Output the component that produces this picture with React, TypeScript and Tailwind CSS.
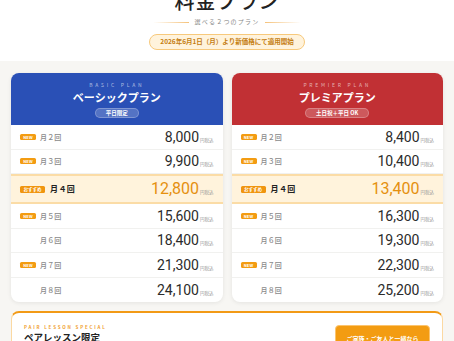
const jp = "font-['Noto_Sans_CJK_JP','Noto_Sans',sans-serif]";

type Row = { label: string; price: string; badge?: "new" | "pick" };

const basic: Row[] = [
  { label: "月２回", price: "8,000", badge: "new" },
  { label: "月３回", price: "9,900", badge: "new" },
  { label: "月４回", price: "12,800", badge: "pick" },
  { label: "月５回", price: "15,600", badge: "new" },
  { label: "月６回", price: "18,400" },
  { label: "月７回", price: "21,300", badge: "new" },
  { label: "月８回", price: "24,100" },
];

const premier: Row[] = [
  { label: "月２回", price: "8,400", badge: "new" },
  { label: "月３回", price: "10,400", badge: "new" },
  { label: "月４回", price: "13,400", badge: "pick" },
  { label: "月５回", price: "16,300", badge: "new" },
  { label: "月６回", price: "19,300" },
  { label: "月７回", price: "22,300", badge: "new" },
  { label: "月８回", price: "25,200" },
];

function PriceRow({ row }: { row: Row }) {
  const pick = row.badge === "pick";
  return (
    <div
      className={
        pick
          ? "h-[30px] flex items-center px-[9px] bg-[#fff3dc] border-y-2 border-[#fbdca6]"
          : "h-[24.5px] flex items-center px-[9px] border-b border-[#f1f1ef] last:border-b-0"
      }
    >
      {pick ? (
        <span className="w-[25px] h-[7px] rounded-[1.5px] bg-[#f0950f] text-white text-[4.5px] font-bold leading-[7px] text-center">
          おすすめ
        </span>
      ) : row.badge === "new" ? (
        <span className="w-[16px] h-[6px] rounded-[1.5px] bg-[#f39c12] text-white text-[4px] font-bold leading-[6px] text-center tracking-[0.05em]">
          NEW
        </span>
      ) : (
        <span className="w-[16px]" />
      )}
      <span
        className={
          pick
            ? "ml-[5px] text-[8px] font-bold text-[#222] tracking-[0.05em]"
            : "ml-[4px] text-[7px] font-medium text-[#8a8a8a] tracking-[0.02em]"
        }
      >
        {row.label}
      </span>
      <span className="ml-auto flex items-baseline">
        <span
          className={
            pick
              ? "font-['Roboto',sans-serif] text-[16px] text-[#e5900f] leading-none"
              : "font-['Roboto',sans-serif] text-[14px] text-[#2b2b2b] leading-none"
          }
        >
          {row.price}
        </span>
        <span className="ml-[1px] text-[4.5px] text-[#999]">円税込</span>
      </span>
    </div>
  );
}

function PlanCard({
  en,
  name,
  tag,
  head,
  rows,
}: {
  en: string;
  name: string;
  tag: string;
  head: string;
  rows: Row[];
}) {
  return (
    <div className="bg-white rounded-[8px] overflow-hidden shadow-[0_1px_4px_rgba(0,0,0,0.08)]">
      <div className={`${head} h-[52px] flex flex-col items-center pt-[8px]`}>
        <div className="h-[8px] text-[5px] tracking-[0.55em] text-white/60 leading-[8px]">{en}</div>
        <div className="text-[11px] leading-[16px] font-bold text-white">{name}</div>
        <div className="mt-[3px] h-[10px] px-[10px] rounded-full bg-white/20 border border-white/25 text-[5.5px] font-bold text-white leading-[8px] flex items-center">
          {tag}
        </div>
      </div>
      <div>
        {rows.map((r) => (
          <PriceRow key={r.label} row={r} />
        ))}
      </div>
    </div>
  );
}

export default function App() {
  return (
    <div className={`w-[454px] h-[341px] overflow-hidden bg-[#f7f6f3] ${jp}`}>
      <header className="bg-white h-[61px] flex flex-col items-center">
        <h1 className="-mt-[9px] text-[20px] leading-none font-medium text-[#222] tracking-[0.05em]">料金プラン</h1>
        <div className="mt-[7px] h-[8px] flex items-center gap-[6px]">
          <span className="w-[36px] h-px bg-gradient-to-r from-transparent to-[#f5c27a]" />
          <span className="text-[6px] tracking-[0.2em] text-[#888] leading-[8px]">選べる２つのプラン</span>
          <span className="w-[36px] h-px bg-gradient-to-l from-transparent to-[#f5c27a]" />
        </div>
        <div className="mt-[8px] h-[16px] w-[156px] rounded-full bg-[#fff3dc] border border-[#f7c97c] flex items-center justify-center text-[6.5px] font-bold text-[#c47d10]">
          2026年6月1日（月）より新価格にて適用開始
        </div>
      </header>
      <main className="px-[11px] pt-[12px]">
        <div className="grid grid-cols-2 gap-[9px]">
          <PlanCard en="BASIC PLAN" name="ベーシックプラン" tag="平日限定" head="bg-[#2a50b6]" rows={basic} />
          <PlanCard en="PREMIER PLAN" name="プレミアプラン" tag="土日祝＋平日 OK" head="bg-[#c13034]" rows={premier} />
        </div>
        <div className="mt-[9px] bg-white rounded-[8px] border border-[#fbd9a2] border-t-2 border-t-[#f29a16] flex justify-between px-[12px] pt-[11px] h-[60px]">
          <div>
            <div className="text-[4.5px] tracking-[0.4em] text-[#f0a030] font-bold leading-[6px]">PAIR LESSON SPECIAL</div>
            <div className="mt-[1px] text-[9.5px] font-bold text-[#222] leading-[12px]">ペアレッスン限定</div>
          </div>
          <div className="mt-[1px] w-[95px] h-[26px] rounded-[4px] bg-[#f39c12] border border-[#fcc46e] flex items-center justify-center text-[6px] font-bold text-white">
            ご家族・ご友人と一緒なら
          </div>
        </div>
      </main>
    </div>
  );
}
